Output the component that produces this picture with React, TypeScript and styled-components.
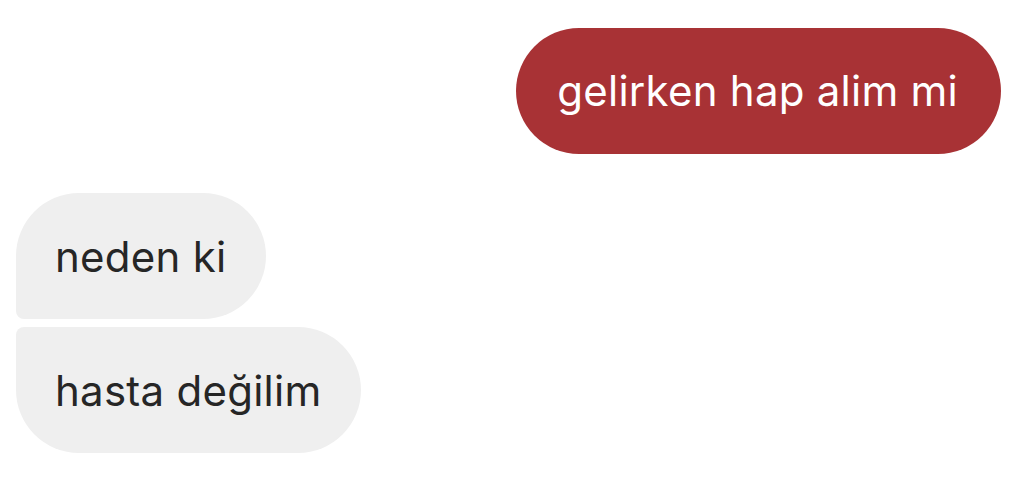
import React from "react";
import styled, { createGlobalStyle } from "styled-components";

const GlobalStyle = createGlobalStyle`
  body {
    margin: 0;
    background: #ffffff;
    font-family: "Inter", "Liberation Sans", sans-serif;
  }
`;

type Corner = "single" | "first" | "last";

const messages: { id: number; text: string; mine: boolean; corner: Corner }[] = [
  { id: 1, text: "gelirken hap alim mi", mine: true, corner: "single" },
  { id: 2, text: "neden ki", mine: false, corner: "first" },
  { id: 3, text: "hasta değilim", mine: false, corner: "last" },
];

function App() {
  return (
    <Wrapper>
      <GlobalStyle />
      {messages.map((m) => (
        <Row key={m.id} $mine={m.mine} $corner={m.corner}>
          <Bubble $mine={m.mine} $corner={m.corner}>
            {m.text}
          </Bubble>
        </Row>
      ))}
    </Wrapper>
  );
}

const Wrapper = styled.div`
  width: 1024px;
  height: 487px;
  box-sizing: border-box;
  padding: 28px 23px 0 16px;
  display: flex;
  flex-direction: column;
`;

const Row = styled.div<{ $mine: boolean; $corner: Corner }>`
  display: flex;
  justify-content: ${(p) => (p.$mine ? "flex-end" : "flex-start")};
  margin-bottom: ${(p) => (p.$mine ? "39px" : p.$corner === "first" ? "8px" : "0")};
`;

const Bubble = styled.div<{ $mine: boolean; $corner: Corner }>`
  height: 126px;
  box-sizing: border-box;
  display: flex;
  align-items: center;
  padding: ${(p) => (p.$mine ? "0 43px 2px 41px" : "0 40px 0 39px")};
  font-size: 42px;
  letter-spacing: 0.25px;
  background: ${(p) => (p.$mine ? "#a83235" : "#efefef")};
  color: ${(p) => (p.$mine ? "#ffffff" : "#262626")};
  border-radius: ${(p) =>
    p.$corner === "first"
      ? "63px 63px 63px 8px"
      : p.$corner === "last"
      ? "8px 63px 63px 63px"
      : "63px"};
`;

export default App;
